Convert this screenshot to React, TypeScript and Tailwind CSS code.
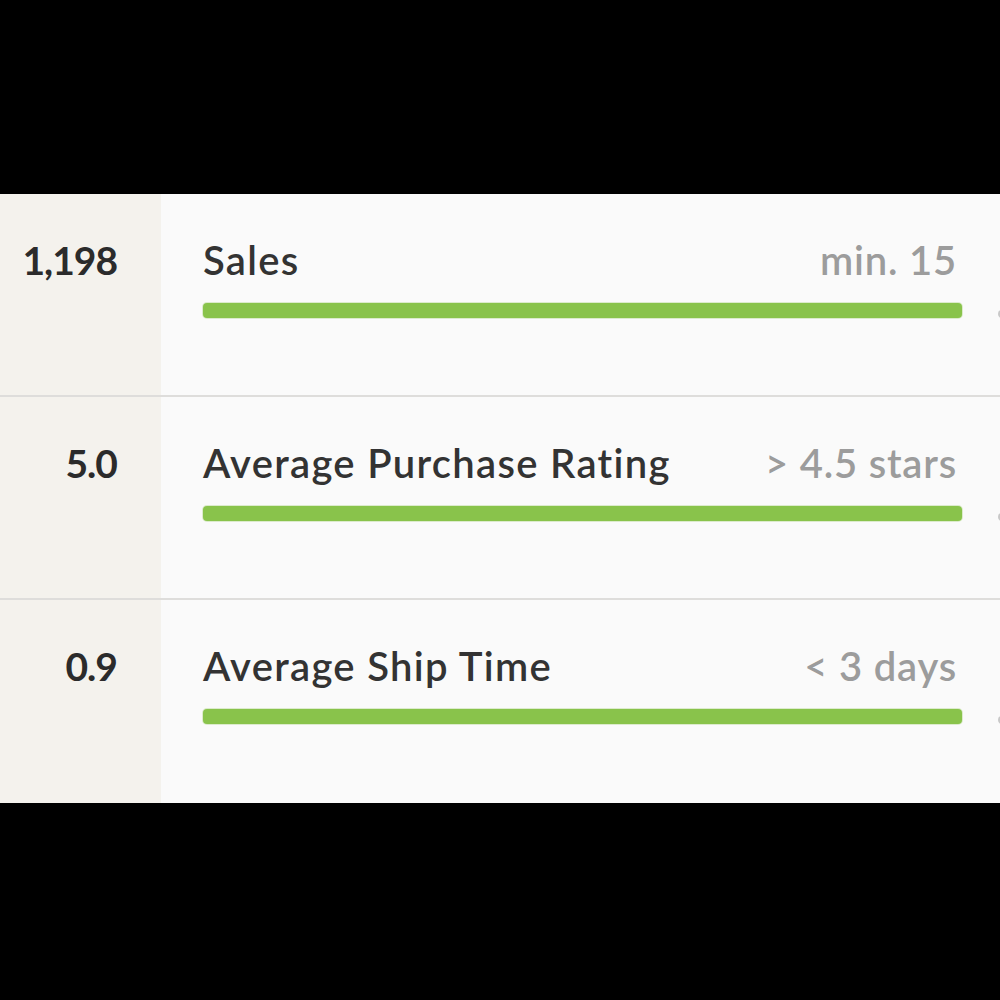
import React from 'react';

const ROWS = [
  { value: '1,198', label: 'Sales', target: 'min. 15' },
  { value: '5.0', label: 'Average Purchase Rating', target: '> 4.5 stars' },
  { value: '0.9', label: 'Average Ship Time', target: '< 3 days' },
];

function StatRow({ value, label, target, last }: { value: string; label: string; target: string; last: boolean }) {
  return (
    <div className={`flex h-[203px] ${last ? '' : 'border-b-2 border-[#dedddb]'}`}>
      {/* Score column */}
      <div className="w-[161px] shrink-0 bg-[#f4f2ed] pr-[44px] pt-[44px] text-right">
        <span className="text-[39px] leading-[44px] font-bold text-[#2b2b2b] tracking-[-1px]">{value}</span>
      </div>

      {/* Label + progress */}
      <div className="relative flex-1 bg-[#fafafa] pl-[42px] pr-[38px] pt-[44px]">
        <div className="flex items-baseline justify-between pr-[5px]">
          <span className="text-[40px] leading-[44px] font-semibold text-[#333333] tracking-[1.3px]">{label}</span>
          <span className="text-[40px] leading-[44px] font-semibold text-[#9c9c9c] tracking-[0.8px]">{target}</span>
        </div>
        <div className="mt-[21px] h-[15px] w-full rounded-[4px] bg-[#89c34b] shadow-[0_0_0_1px_#dcebcc]" />
        {/* cut-off handle at the edge */}
        <div className="absolute right-[-6px] top-[116px] h-[8px] w-[8px] rounded-full bg-[#c8c8c8]" />
      </div>
    </div>
  );
}

export default function App() {
  return (
    <div className="h-[1000px] w-[1000px] overflow-hidden bg-black" style={{ fontFamily: 'Lato, "Noto Sans", sans-serif' }}>
      <div className="mt-[194px] w-[1000px]">
        {ROWS.map((row, i) => (
          <StatRow key={row.label} {...row} last={i === ROWS.length - 1} />
        ))}
      </div>
    </div>
  );
}
